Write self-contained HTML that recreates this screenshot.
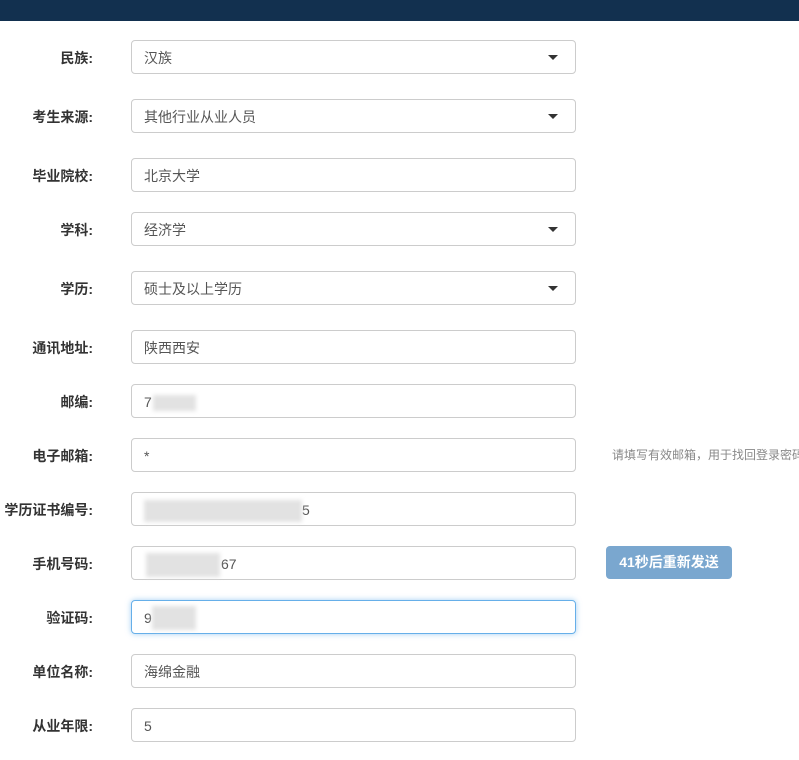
<!DOCTYPE html><html><head><meta charset="utf-8"><style>
body{margin:0;width:799px;height:760px;background:#fff;font-family:"Liberation Sans","Noto Sans CJK SC",sans-serif;font-size:14px;color:#555;position:relative;overflow:hidden}
.nav{position:absolute;left:0;top:0;width:799px;height:21px;background:#12304f}
.l{position:absolute;right:706px;width:130px;text-align:right;font-weight:bold;color:#333;font-size:14px;line-height:36px}
.i{position:absolute;left:131px;height:32px;border:1px solid #ccc;border-radius:4px;line-height:34px;padding-left:12px;width:431px;color:#555;font-size:14px}
.c{position:absolute;right:17px;top:14px;border-left:5px solid transparent;border-right:5px solid transparent;border-top:5px solid #333}
.blur{position:absolute;background:#e2e2e2;filter:blur(2px)}
</style></head><body>
<div class="nav"></div>
<div class="l" style="top:40px">民族:</div><div class="i" style="top:40px">汉族<span class="c"></span></div>
<div class="l" style="top:99px">考生来源:</div><div class="i" style="top:99px">其他行业从业人员<span class="c"></span></div>
<div class="l" style="top:158px">毕业院校:</div><div class="i" style="top:158px">北京大学</div>
<div class="l" style="top:212px">学科:</div><div class="i" style="top:212px">经济学<span class="c"></span></div>
<div class="l" style="top:271px">学历:</div><div class="i" style="top:271px">硕士及以上学历<span class="c"></span></div>
<div class="l" style="top:330px">通讯地址:</div><div class="i" style="top:330px">陕西西安</div>
<div class="l" style="top:384px">邮编:</div><div class="i" style="top:384px">7</div><div class="blur" style="left:153px;top:395px;width:43px;height:16px"></div>
<div class="l" style="top:438px">电子邮箱:</div><div class="i" style="top:438px">*</div>
<div style="position:absolute;left:612px;top:446px;font-size:12px;color:#888;white-space:nowrap">请填写有效邮箱，用于找回登录密码</div>
<div class="l" style="top:492px">学历证书编号:</div><div class="i" style="top:492px"><span style="margin-left:158px">5</span></div><div class="blur" style="left:144px;top:500px;width:158px;height:22px"></div>
<div class="l" style="top:546px">手机号码:</div><div class="i" style="top:546px"><span style="margin-left:77px">67</span></div><div class="blur" style="left:146px;top:553px;width:74px;height:24px"></div>
<div style="position:absolute;left:606px;top:546px;width:126px;height:33px;background:#7aa7cf;border-radius:4px;color:#fff;font-weight:bold;font-size:14px;line-height:33px;text-align:center">41秒后重新发送</div>
<div class="l" style="top:600px">验证码:</div><div class="i" style="top:600px;border-color:#66afe9;box-shadow:0 0 6px rgba(102,175,233,.6)">9</div><div class="blur" style="left:152px;top:606px;width:44px;height:24px"></div>
<div class="l" style="top:654px">单位名称:</div><div class="i" style="top:654px">海绵金融</div>
<div class="l" style="top:708px">从业年限:</div><div class="i" style="top:708px">5</div>
</body></html>
